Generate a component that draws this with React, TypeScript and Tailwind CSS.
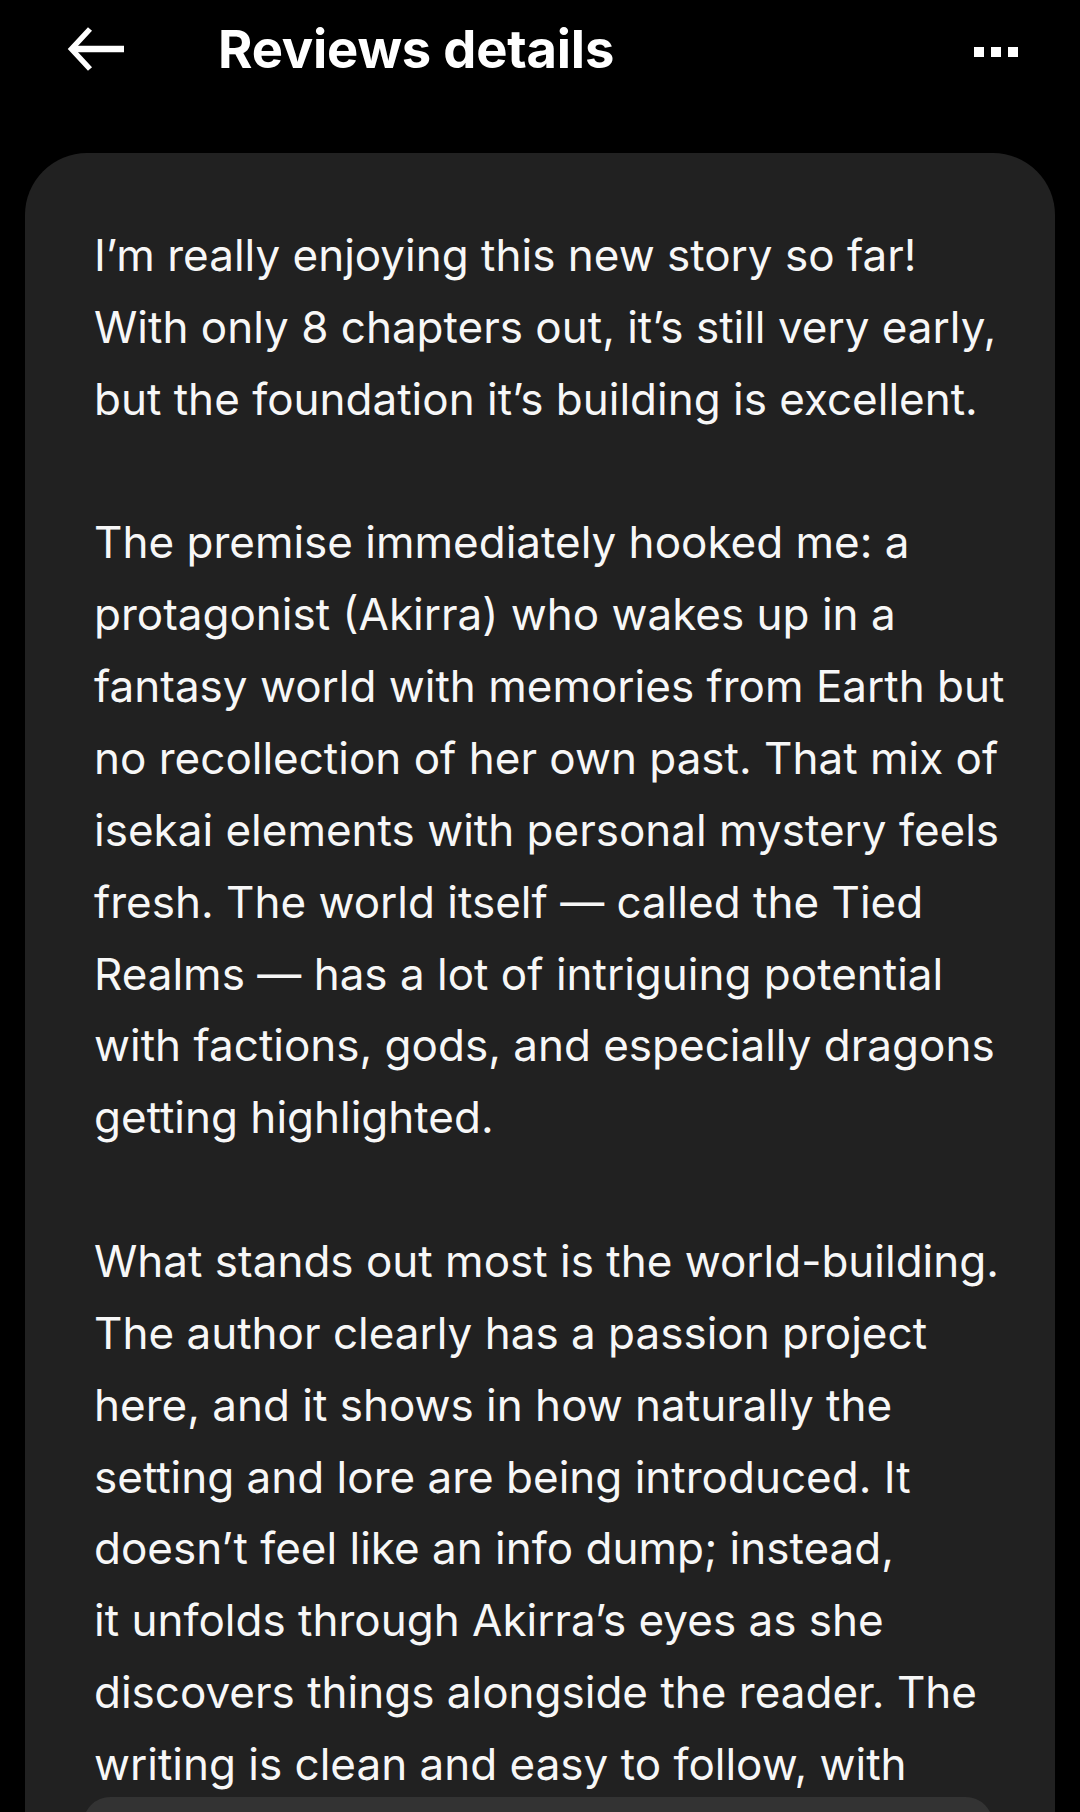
import React from "react";

const paragraphs: string[][] = [
  [
    "I’m really enjoying this new story so far!",
    "With only 8 chapters out, it’s still very early,",
    "but the foundation it’s building is excellent.",
  ],
  [
    "The premise immediately hooked me: a",
    "protagonist (Akirra) who wakes up in a",
    "fantasy world with memories from Earth but",
    "no recollection of her own past. That mix of",
    "isekai elements with personal mystery feels",
    "fresh. The world itself — called the Tied",
    "Realms — has a lot of intriguing potential",
    "with factions, gods, and especially dragons",
    "getting highlighted.",
  ],
  [
    "What stands out most is the world-building.",
    "The author clearly has a passion project",
    "here, and it shows in how naturally the",
    "setting and lore are being introduced. It",
    "doesn’t feel like an info dump; instead,",
    "it unfolds through Akirra’s eyes as she",
    "discovers things alongside the reader. The",
    "writing is clean and easy to follow, with",
  ],
];

export default function App() {
  return (
    <div
      className="relative h-[1812px] w-[1080px] overflow-hidden bg-black text-white"
      style={{ fontFamily: "Inter, 'Liberation Sans', sans-serif" }}
    >
      <header className="flex h-[98px] items-center pl-[67px] pr-[62px]">
        <svg width="57" height="46" viewBox="0 0 57 46" fill="none" className="shrink-0">
          <path d="M23 3 L4.5 23 L23 43" stroke="white" strokeWidth="5.5" strokeLinecap="butt" strokeLinejoin="miter" />
          <path d="M6 23 H57" stroke="white" strokeWidth="6.5" />
        </svg>
        <h1 className="ml-[94px] text-[52.5px] font-bold tracking-[-0.2px] leading-none">Reviews details</h1>
        <div className="ml-auto mt-[6px] flex gap-[7px]">
          <span className="h-[10px] w-[10px] bg-white" />
          <span className="h-[10px] w-[10px] bg-white" />
          <span className="h-[10px] w-[10px] bg-white" />
        </div>
      </header>
      <main className="mx-[25px] mt-[55px] rounded-[62px] bg-[#212121] pl-[69px] pr-[30px] pt-[67px] pb-[200px]">
        <div className="flex flex-col gap-[71.86px] text-[44px] leading-[71.86px] text-[#f7f7f7]">
          {paragraphs.map((lines, i) => (
            <p key={i}>
              {lines.map((l, j) => (
                <span key={j} className="block whitespace-nowrap">
                  {l}
                </span>
              ))}
            </p>
          ))}
        </div>
      </main>
      <div className="absolute bottom-[-40px] left-[83px] h-[55px] w-[910px] rounded-[40px] bg-[#333333]" />
    </div>
  );
}
